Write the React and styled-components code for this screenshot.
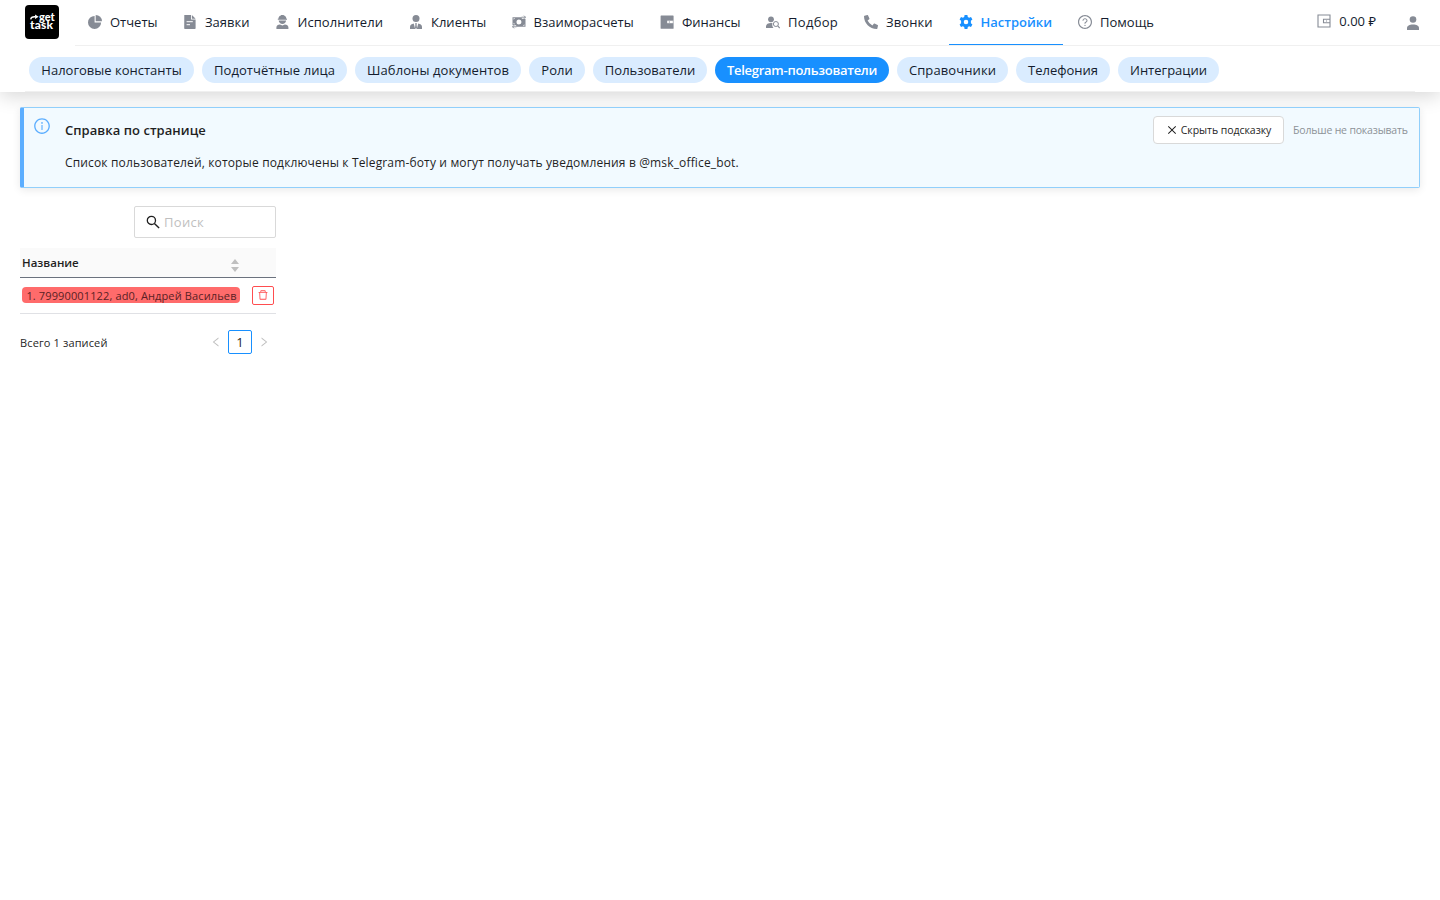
import React from "react";
import styled, { createGlobalStyle } from "styled-components";
import {
  AiOutlineClose,
  AiOutlineDelete,
  AiOutlineInfoCircle,
  AiOutlineLeft,
  AiOutlineQuestionCircle,
  AiOutlineRight,
} from "react-icons/ai";
import { FaPhoneAlt } from "react-icons/fa";

const PieIcon = () => (
  <svg viewBox="0 0 14 14">
    <path d="M6.600.9v6.500h6.500A6.550 6.550 0 1 1 6.600.9z" />
    <path d="M7.700 0A6.300 6.300 0 0 1 14 6.300H7.700z" />
  </svg>
);

const DocIcon = () => (
  <svg viewBox="0 0 14 14">
    <path d="M1.300 0H8v4.600h4.600V13.300a.7.7 0 0 1-.7.7H1.900a.7.7 0 0 1-.7-.7z" />
    <path d="M8.900 0 12.600 3.700H8.900z" />
    <path d="M3.600 6.700h6.200M3.600 9.700h3.400" stroke="#fff" strokeWidth="1" />
  </svg>
);

const WorkerIcon = () => (
  <svg viewBox="0 0 14 14">
    <path d="M2.400 3.700C2.500 1.900 3.600.8 5 .6V0h2.800v.6c1.400.3 2.500 1.400 2.600 3.100h.6v1H1.800v-1z" />
    <path d="M2.700 5.500h7.400C9.900 7.700 8.300 8.900 6.400 8.900S2.900 7.700 2.700 5.500z" />
    <path d="M.4 14v-1.700c0-1.600 1.600-2.400 3.500-2.700l2.500.9 2.500-.9c1.900.3 3.500 1.100 3.500 2.700V14z" />
  </svg>
);

const ClientIcon = () => (
  <svg viewBox="0 0 14 14">
    <circle cx="7" cy="3.500" r="3.500" />
    <path d="M1 14v-2.200C1 9.800 3 8.700 4.700 8.400L6.200 14z" />
    <path d="M13 14v-2.200c0-2-2-3.100-3.700-3.400L7.800 14z" />
    <path d="M6 8.300h2l-.4 1.400L8 13l-1 1-1-1 .4-3.300z" />
  </svg>
);

const MoneyIcon = () => (
  <svg viewBox="0 0 14 14">
    <path
      fillRule="evenodd"
      d="M.5 2.200h9.300v1.600h3.700v8H4.200v-1.600H.5zM7 4.500a2.500 2.500 0 1 0 0 5 2.500 2.500 0 0 0 0-5zM1.600 3.300v1.500l1.500-1.500zM12.400 10.700V9.200l-1.500 1.500zM1.600 9.200h1.500L1.600 7.700z"
    />
    <path
      d="M9.500 2.200h4M12 .7l1.500 1.500L12 3.700M4.500 11.800H.5M2 10.300.5 11.800 2 13.300"
      fill="none"
      stroke="currentColor"
      strokeWidth=".9"
    />
  </svg>
);

const FinanceIcon = () => (
  <svg viewBox="0 0 14 14">
    <rect x=".6" y=".4" width="13" height="13.400" rx=".6" />
    <path d="M7.200 5.700h6.400v2.500H7.200z" fill="#fff" />
    <path d="M8.800 6.500H10v1H8.800z" />
    <path d="M12.700 5.700h.9v2.500h-.9z" opacity=".5" />
  </svg>
);

// six teeth round a ring
const GearIcon = () => (
  <svg viewBox="0 0 14 14">
    <path
      fillRule="evenodd"
      d="M5.600 0h2.800l.4 1.900 1.300.8 1.900-.7 1.400 2.500-1.500 1.300v2.400l1.500 1.300-1.400 2.500-1.900-.7-1.300.8-.4 1.900H5.600l-.4-1.900-1.300-.8-1.900.7L.6 9.500l1.500-1.300V5.800L.6 4.500 2 2l1.900.7 1.300-.8zM7 4.700a2.300 2.300 0 1 0 0 4.600 2.300 2.300 0 0 0 0-4.600z"
    />
  </svg>
);

const WalletIcon = () => (
  <svg viewBox="0 0 14 14">
    <path
      d="M13 5.200V1H1v12h12V8.800M13 5.200H6.500v3.600H13zM9.500 6.500v1"
      fill="none"
      stroke="currentColor"
      strokeWidth="1.100"
    />
  </svg>
);

const PickIcon = () => (
  <svg viewBox="0 0 14 14">
    <circle cx="5" cy="4.300" r="2.900" />
    <path d="M0 13v-1.700C0 9.200 2.400 8 5 8c.6 0 1 .1 1.500.2-.5 1.600-.2 3.400 1 4.800z" />
    <circle cx="9.900" cy="9" r="2.500" fill="none" stroke="currentColor" />
    <path d="m11.700 10.800 2.100 2.200" stroke="currentColor" strokeWidth="1.100" />
  </svg>
);

const PersonIcon = () => (
  <svg viewBox="0 0 14 14">
    <circle cx="7" cy="3.500" r="3.300" />
    <path d="M1 14v-2c0-2.100 2.300-3.500 6-3.500s6 1.400 6 3.500v2z" />
  </svg>
);

const SearchIcon = () => (
  <svg viewBox="0 0 14 14">
    <circle cx="5.400" cy="5.400" r="4.100" fill="none" stroke="currentColor" strokeWidth="1.300" />
    <path d="m8.400 8.400 4.700 4.700" stroke="currentColor" strokeWidth="1.400" />
  </svg>
);

const LogoArrow = () => (
  <svg viewBox="0 0 10 6">
    <path d="M.8 5.600C1 3.400 2.800 2.500 6 2.700" fill="none" stroke="#fff" strokeWidth="1.500" />
    <path d="M5.600.2 9.600 2.800 5.600 5.200z" fill="#fff" />
  </svg>
);

const menu = [
  { title: "Отчеты", icon: <PieIcon />, width: 95 },
  { title: "Заявки", icon: <DocIcon />, width: 92.5 },
  { title: "Исполнители", icon: <WorkerIcon />, width: 133.5, spacing: 0.04 },
  { title: "Клиенты", icon: <ClientIcon />, width: 102.5 },
  { title: "Взаиморасчеты", icon: <MoneyIcon />, width: 148.5 },
  { title: "Финансы", icon: <FinanceIcon />, width: 106 },
  { title: "Подбор", icon: <PickIcon />, width: 98, spacing: 0.3 },
  { title: "Звонки", icon: <FaPhoneAlt />, width: 94.5, spacing: 0.1 },
  { title: "Настройки", icon: <GearIcon />, width: 119.5, active: true },
  { title: "Помощь", icon: <AiOutlineQuestionCircle />, width: 102, bleed: true },
];

const tabs = [
  { title: "Налоговые константы", width: 165 },
  { title: "Подотчётные лица", width: 145, spacing: 0.06 },
  { title: "Шаблоны документов", width: 166, spacing: 0.1 },
  { title: "Роли", width: 56 },
  { title: "Пользователи", width: 114 },
  { title: "Telegram-пользователи", width: 174, spacing: -0.27, active: true },
  { title: "Справочники", width: 111, spacing: 0.1 },
  { title: "Телефония", width: 94 },
  { title: "Интеграции", width: 101 },
];

export default function App() {
  return (
    <Page>
      <GlobalStyle />
      <Header>
        <TopBar>
          <Logo>
            <LogoTop>
              <LogoArrow />
              get
            </LogoTop>
            <LogoBottom>task</LogoBottom>
          </Logo>
          <Menu>
            {menu.map((item) => (
              <MenuItem
                key={item.title}
                $width={item.width}
                $active={item.active}
                $bleed={item.bleed}
                $spacing={item.spacing}
              >
                {item.icon}
                <span>{item.title}</span>
              </MenuItem>
            ))}
            <Balance>
              <WalletIcon />
              0.00 ₽
            </Balance>
            <Profile>
              <PersonIcon />
            </Profile>
          </Menu>
        </TopBar>
        <Tabs>
          {tabs.map((tab) => (
            <Tab
              key={tab.title}
              $width={tab.width}
              $active={tab.active}
              $spacing={tab.spacing}
            >
              {tab.title}
            </Tab>
          ))}
        </Tabs>
      </Header>
      <Content>
        <Hint>
          <AiOutlineInfoCircle />
          <HintBody>
            <HintTitle>Справка по странице</HintTitle>
            <HintText>
              Список пользователей, которые подключены к Telegram-боту и могут
              получать уведомления в @msk_office_bot.
            </HintText>
          </HintBody>
          <HintActions>
            <HideButton>
              <AiOutlineClose />
              Скрыть подсказку
            </HideButton>
            <NeverButton>Больше не показывать</NeverButton>
          </HintActions>
        </Hint>
        <Side>
          <Search>
            <SearchIcon />
            <input placeholder="Поиск" />
          </Search>
          <TableHead>
            Название
            <Sorter viewBox="0 0 8 13">
              <path d="M4 0 8 5H0zM0 8h8l-4 5z" />
            </Sorter>
          </TableHead>
          <TableRow>
            <UserTag>1. 79990001122, ad0, Андрей Васильев</UserTag>
            <DeleteButton>
              <AiOutlineDelete />
            </DeleteButton>
          </TableRow>
          <Footer>
            <Total>Всего 1 записей</Total>
            <Pager>
              <AiOutlineLeft />
              <PageNumber>1</PageNumber>
              <AiOutlineRight />
            </Pager>
          </Footer>
        </Side>
      </Content>
    </Page>
  );
}

const GlobalStyle = createGlobalStyle`
  * {
    box-sizing: border-box;
  }
  body {
    margin: 0;
    background: #fff;
    color: #1f1f1f;
    font-family: "Open Sans", "Noto Sans", sans-serif;
    font-size: 13px;
  }
  button, input {
    font-family: inherit;
  }
  svg {
    display: block;
    flex: none;
    fill: currentColor;
  }
`;

const Page = styled.div`
  min-height: 100vh;
`;

const Header = styled.header`
  height: 92px;
  background: #fff;
  box-shadow: 0 4px 18px rgba(0, 0, 0, 0.16);
`;

const TopBar = styled.div`
  display: flex;
  height: 46px;
  padding-left: 25px;
`;

const Logo = styled.div`
  width: 34px;
  height: 34px;
  margin: 5px 16px 0 0;
  padding: 7px 5px 0;
  border-radius: 4px;
  background: #000;
  color: #fff;
  font-family: Lato, sans-serif;
  font-size: 11px;
  font-weight: 900;
  line-height: 8px;
`;

const LogoTop = styled.div`
  display: flex;
  align-items: center;
  height: 9px;
  svg {
    width: 9px;
    height: 6px;
  }
`;

const LogoBottom = styled.div`
  font-size: 12px;
  letter-spacing: 0.2px;
`;

const Menu = styled.nav`
  display: flex;
  flex: 1;
  padding-left: 3px;
  border-bottom: 1px solid #f0f0f0;
`;

const MenuItem = styled.div`
  display: flex;
  align-items: center;
  gap: 8px;
  width: ${({ $width }) => $width - 5}px;
  height: 45px;
  margin-right: 5px;
  padding: 0 0 1px 10px;
  border-bottom: 1px solid ${({ $active }) => ($active ? "#1890ff" : "transparent")};
  color: ${({ $active }) => ($active ? "#1890ff" : "#141c2e")};
  font-weight: ${({ $active }) => ($active ? 600 : 400)};
  letter-spacing: ${({ $spacing }) => $spacing || 0}px;
  white-space: nowrap;
  svg {
    width: ${({ $bleed }) => ($bleed ? 16 : 14)}px;
    height: ${({ $bleed }) => ($bleed ? 16 : 14)}px;
    margin: ${({ $bleed }) => ($bleed ? "-1px" : "0")};
    color: ${({ $active }) => ($active ? "#1890ff" : "#868b95")};
  }
`;

const Balance = styled.div`
  display: flex;
  align-items: center;
  gap: 8px;
  height: 42px;
  margin-left: auto;
  color: #141c2e;
  svg {
    width: 14px;
    height: 14px;
    color: #868b95;
  }
`;

const Profile = styled.div`
  padding: 16px 20px 0 30px;
  color: #868b95;
  svg {
    width: 14px;
    height: 14px;
  }
`;

const Tabs = styled.div`
  display: flex;
  gap: 8px;
  height: 46px;
  margin: 0 25px;
  padding: 11px 0 0 4px;
  border-bottom: 1px solid #f0f0f0;
`;

const Tab = styled.div`
  width: ${({ $width }) => $width}px;
  height: 26px;
  border-radius: 13px;
  background: ${({ $active }) => ($active ? "#1890ff" : "#daecff")};
  color: ${({ $active }) => ($active ? "#fff" : "#141c2e")};
  font-weight: ${({ $active }) => ($active ? 600 : 400)};
  letter-spacing: ${({ $spacing }) => $spacing || 0}px;
  line-height: 26px;
  text-align: center;
  white-space: nowrap;
`;

const Content = styled.main`
  padding: 15px 20px;
`;

const Hint = styled.section`
  display: flex;
  height: 81px;
  padding: 9px 11px 0 9px;
  border: 1px solid #91cffb;
  border-left: 4px solid #5caeff;
  border-radius: 2px;
  background: #f2faff;
  box-shadow: 0 2px 8px rgba(0, 0, 0, 0.09);
  > svg {
    width: 18px;
    height: 18px;
    color: #5caeff;
  }
`;

const HintBody = styled.div`
  flex: 1;
  padding: 3px 0 0 14px;
`;

const HintTitle = styled.div`
  font-weight: 600;
  letter-spacing: 0.05px;
  line-height: 20px;
`;

const HintText = styled.div`
  margin-top: 13px;
  font-size: 12px;
  letter-spacing: 0.15px;
  line-height: 20px;
`;

const HintActions = styled.div`
  display: flex;
  gap: 9px;
  margin-top: -1px;
`;

const HideButton = styled.button`
  display: flex;
  align-items: center;
  justify-content: center;
  gap: 3px;
  width: 131px;
  height: 28px;
  padding: 0;
  border: 1px solid #d9d9d9;
  border-radius: 4px;
  background: #fff;
  color: #1f1f1f;
  font-size: 10.5px;
  letter-spacing: -0.05px;
  white-space: nowrap;
  svg {
    width: 12px;
    height: 12px;
  }
`;

const NeverButton = styled.button`
  width: 115px;
  height: 28px;
  padding: 0;
  border: 0;
  background: none;
  color: #8d9297;
  font-size: 10.5px;
  letter-spacing: -0.18px;
  text-align: left;
  white-space: nowrap;
`;

const Side = styled.section`
  display: flex;
  flex-direction: column;
  width: 256px;
  margin-top: 18px;
`;

const Search = styled.label`
  display: flex;
  align-items: center;
  align-self: flex-end;
  width: 142px;
  height: 32px;
  margin-bottom: 10px;
  padding-left: 11px;
  border: 1px solid #d9d9d9;
  border-radius: 2px;
  svg {
    width: 14px;
    height: 14px;
  }
  input {
    width: 100px;
    padding: 0 0 0 4px;
    border: 0;
    outline: 0;
    font-size: 13px;
    letter-spacing: 0.3px;
    &::placeholder {
      color: #bfbfbf;
    }
  }
`;

const TableHead = styled.div`
  display: flex;
  align-items: center;
  justify-content: space-between;
  height: 30px;
  padding: 0 37.5px 0 2px;
  border-bottom: 1px solid #6b727e;
  background: #fafafa;
  font-size: 11.5px;
  font-weight: 600;
`;

const Sorter = styled.svg`
  width: 8px;
  height: 13px;
  margin-top: 5px;
  color: #bfbfbf;
`;

const TableRow = styled.div`
  display: flex;
  align-items: center;
  justify-content: space-between;
  height: 36px;
  padding: 0 2px;
  border-bottom: 1px solid #e0e1e5;
`;

const UserTag = styled.div`
  width: 218px;
  height: 16px;
  margin-bottom: 1px;
  padding-left: 1px;
  border-radius: 4px;
  background: #ff6b6b;
  color: #591f24;
  font-size: 11px;
  letter-spacing: 0.13px;
  line-height: 17px;
  text-align: center;
  white-space: nowrap;
`;

const DeleteButton = styled.button`
  display: flex;
  align-items: center;
  justify-content: center;
  width: 22px;
  height: 19px;
  padding: 0 0 1px;
  border: 1px solid #ff4d4f;
  border-radius: 2px;
  background: #fff;
  color: #ff4d4f;
  svg {
    width: 12px;
    height: 12px;
  }
`;

const Footer = styled.div`
  display: flex;
  align-items: center;
  justify-content: space-between;
  height: 24px;
  margin-top: 16px;
`;

const Total = styled.div`
  font-size: 11px;
  letter-spacing: 0.13px;
`;

const Pager = styled.div`
  display: flex;
  align-items: center;
  gap: 6px;
  padding-right: 6px;
  color: #bfbfbf;
  svg {
    width: 12px;
    height: 12px;
  }
`;

const PageNumber = styled.div`
  width: 24px;
  height: 24px;
  border: 1px solid #1890ff;
  border-radius: 2px;
  color: #1f1f1f;
  font-weight: 500;
  line-height: 22px;
  text-align: center;
`;
